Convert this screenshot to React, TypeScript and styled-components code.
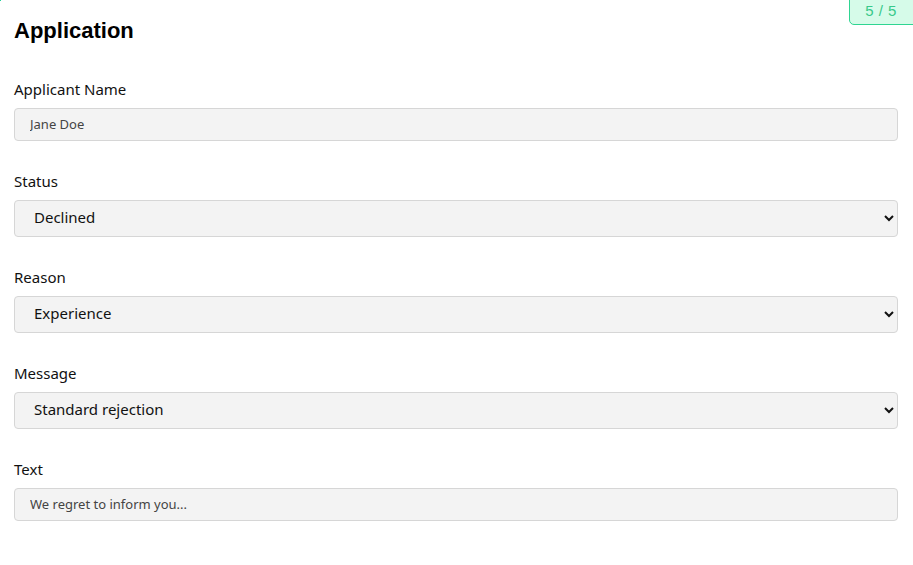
import React, { useState } from "react";
import styled, { createGlobalStyle } from "styled-components";

const GlobalStyle = createGlobalStyle`
  html, body {
    margin: 0;
    padding: 0;
    background: #fff;
  }
  body {
    font-family: "Noto Sans", "Liberation Sans", Arial, sans-serif;
    color: #111;
  }
`;

const Page = styled.div`
  position: relative;
  padding: 17px 15px 20px 14px;
  min-height: 565px;
  box-sizing: border-box;
`;

const CornerMark = styled.span`
  position: absolute;
  top: 0;
  left: 0;
  width: 1px;
  height: 1px;
  background: #22d39a;
`;

const Badge = styled.div`
  position: absolute;
  top: -6px;
  right: -10px;
  width: 74px;
  height: 31px;
  box-sizing: border-box;
  padding-top: 5px;
  padding-right: 10px;
  border: 1px solid #2fd592;
  border-radius: 5px;
  background: #d6fbe9;
  color: #38c98a;
  font-family: "Liberation Sans", Arial, sans-serif;
  font-size: 15px;
  text-align: center;
  line-height: 22px;
  letter-spacing: 0.5px;
`;

const Title = styled.h1`
  margin: 0 0 35px;
  font-family: "Liberation Sans", Arial, sans-serif;
  font-size: 22px;
  line-height: 28px;
  font-weight: 700;
  color: #000;
`;

const Field = styled.div`
  display: flex;
  flex-direction: column;
  margin-bottom: 31px;
`;

const Label = styled.label`
  display: block;
  font-size: 15px;
  line-height: 18px;
  margin-bottom: 10px;
  color: #111;
`;

const TextInput = styled.input`
  box-sizing: border-box;
  width: 100%;
  height: 33px;
  padding: 0 15px 2px;
  border: 1px solid #d6d6d6;
  border-radius: 4px;
  background: #f3f3f3;
  font-family: "Noto Sans", "Liberation Sans", Arial, sans-serif;
  font-size: 13px;
  color: #444;
  outline: none;
`;

const Select = styled.select`
  box-sizing: border-box;
  width: 100%;
  height: 37px;
  padding: 0 12px 4px 15px;
  border: 1px solid #d6d6d6;
  border-radius: 4px;
  background-color: #f3f3f3;
  font-family: "Noto Sans", "Liberation Sans", Arial, sans-serif;
  font-size: 15px;
  color: #111;
  outline: none;
`;

type SelectField = {
  label: string;
  value: string;
  options: string[];
};

const selects: SelectField[] = [
  { label: "Status", value: "Declined", options: ["Pending", "Accepted", "Declined"] },
  { label: "Reason", value: "Experience", options: ["Experience", "Skills", "Location", "Other"] },
  { label: "Message", value: "Standard rejection", options: ["Standard rejection", "Custom"] },
];

const App: React.FC = () => {
  const [values, setValues] = useState(selects.map(s => s.value));

  return (
    <Page>
      <GlobalStyle />
      <CornerMark />
      <Badge>5 / 5</Badge>
      <Title>Application</Title>
      <Field>
        <Label>Applicant Name</Label>
        <TextInput defaultValue="Jane Doe" readOnly />
      </Field>
      {selects.map((s, index) => (
        <Field key={s.label}>
          <Label>{s.label}</Label>
          <Select
            value={values[index]}
            onChange={e => {
              const next = [...values];
              next[index] = e.target.value;
              setValues(next);
            }}
          >
            {s.options.map(o => (
              <option key={o}>{o}</option>
            ))}
          </Select>
        </Field>
      ))}
      <Field>
        <Label>Text</Label>
        <TextInput defaultValue="We regret to inform you..." readOnly />
      </Field>
    </Page>
  );
};

export default App;
